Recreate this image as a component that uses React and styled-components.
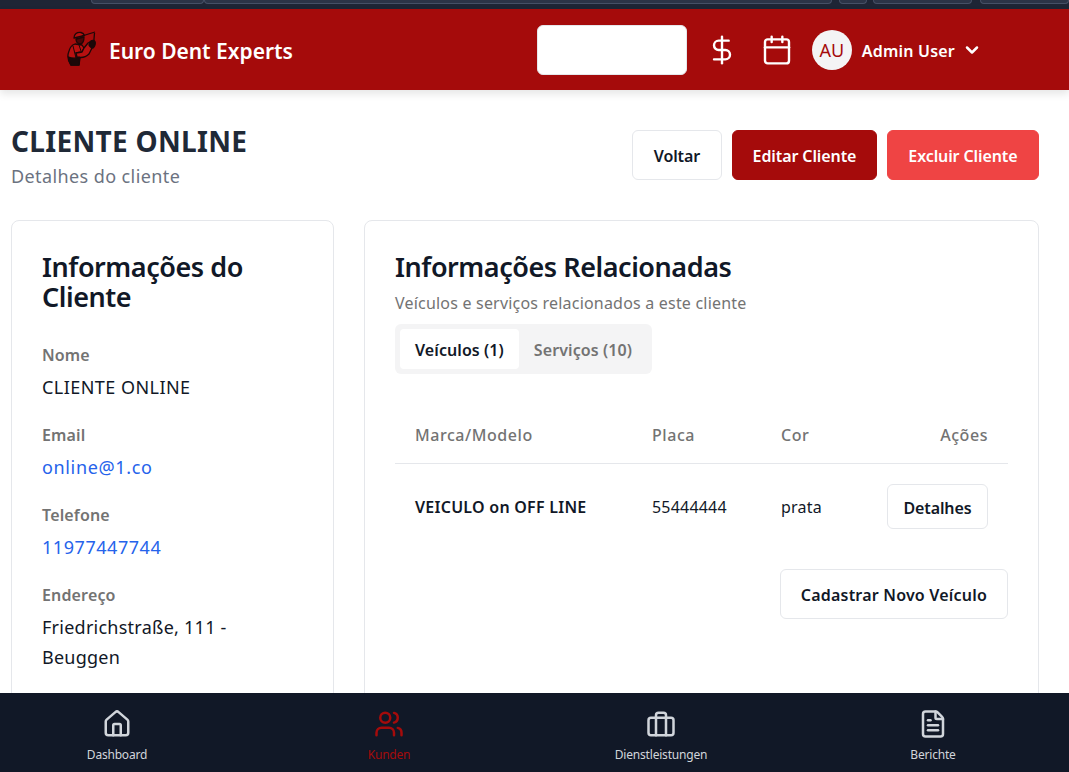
import React from "react";
import styled, { createGlobalStyle } from "styled-components";
import { DollarSign, Calendar, ChevronDown, House, Users, FileText } from "lucide-react";

const Global = createGlobalStyle`
  html, body { margin: 0; padding: 0; background: #fff; }
  body { font-family: "Noto Sans", "Open Sans", sans-serif; color: #111827; height: 772px; overflow: hidden; }
  * { box-sizing: border-box; }
`;

const Chrome = styled.div`
  height: 9px; background: #1e2535; display: flex; padding-left: 91px;
`;
const ChromeTab = styled.div`
  width: ${(p) => p.$w}px; height: 4px; background: #2c3447; border: 1px solid #465066; border-top: 0;
  border-radius: 0 0 5px 5px; margin-right: ${(p) => p.$gap || 0}px;
`;
const Header = styled.header`
  height: 81px; background: #a50b0b; box-shadow: 0 4px 8px rgba(0,0,0,.1);
  display: flex; align-items: center; padding: 0 87px 0 67px; color: #fff; position: relative; z-index: 1;
`;
const Brand = styled.div`
  display: flex; align-items: center; gap: 11px; font-size: 21px; font-weight: 600; flex: 1; letter-spacing: -0.02px;
  span { padding-top: 3px; }
`;
const SearchBox = styled.div`
  width: 150px; height: 50px; background: #fff; border-radius: 6px; border: 1px solid #e5e7eb;
`;
const IconBtn = styled.div`
  width: 32px; display: flex; justify-content: center; margin-left: ${(p) => p.$ml}px;
`;
const Avatar = styled.div`
  width: 40px; height: 40px; border-radius: 50%; background: #f4f4f5; color: #a50b0b;
  display: flex; align-items: center; justify-content: center; font-size: 18px; margin-left: 19px;
`;
const UserName = styled.div`
  font-size: 16px; font-weight: 600; margin-left: 10px; margin-right: 7px; padding-top: 3px; letter-spacing: 0.2px;
`;
const Main = styled.main`
  height: 682px; overflow: hidden; padding: 40px 30px 0 11px;
`;
const TitleRow = styled.div`
  display: flex; justify-content: space-between; align-items: flex-start; height: 90px;
`;
const Title = styled.h1`
  margin: 0; font-size: 28px; line-height: 24px; font-weight: 700; color: #1f2937; letter-spacing: 0.3px;
  position: relative; top: -1px;
`;
const Subtitle = styled.p`
  margin: 10px 0 0; font-size: 18px; line-height: 24px; color: #6b7280; letter-spacing: 0.4px;
`;
const Actions = styled.div`
  display: flex; gap: 10px;
`;
const Button = styled.button`
  font-family: inherit; height: ${(p) => p.$h || 50}px; padding: 2px ${(p) => p.$px || 20}px 0; border-radius: 6px;
  font-size: 16px; font-weight: 600; cursor: pointer; letter-spacing: -0.1px;
  background: ${(p) => p.$bg || "#fff"}; color: ${(p) => p.$color || "#111827"};
  border: 1px solid ${(p) => p.$border || "#e5e7eb"};
`;
const Columns = styled.div`
  display: grid; grid-template-columns: 323px 675px; gap: 30px;
`;
const Card = styled.section`
  border: 1px solid #e5e7eb; border-radius: 8px; background: #fff; padding: 31px 30px 30px; height: 600px;
`;
const CardTitle = styled.h2`
  margin: 0; font-size: 27px; line-height: 30px; font-weight: 600; color: #111827; letter-spacing: -0.45px;
`;
const Field = styled.div`
  margin-top: ${(p) => p.$mt || 18}px;
`;
const Label = styled.div`
  font-size: 16px; line-height: 30px; font-weight: 600; color: #737373; letter-spacing: 0.15px;
`;
const Value = styled.div`
  font-size: 18px; line-height: 30px; padding-top: 2px; letter-spacing: ${(p) => p.$ls || 0.45}px;
  color: ${(p) => (p.$link ? "#2563eb" : "#111827")};
`;
const Desc = styled.p`
  margin: 9px 0 0; font-size: 16px; line-height: 24px; color: #737373; letter-spacing: 0.2px;
`;
const Tabs = styled.div`
  margin-top: 9px; display: inline-flex; padding: 5px; background: #f4f4f5; border-radius: 6px; height: 50px;
`;
const Tab = styled.div`
  display: flex; align-items: center; padding: 2px 15px 0; border-radius: 4px; font-size: 16px; font-weight: 600; letter-spacing: 0.08px;
  background: ${(p) => (p.$active ? "#fff" : "transparent")};
  color: ${(p) => (p.$active ? "#111827" : "#737373")};
`;
const Table = styled.div`
  margin-top: 30px;
`;
const TableHead = styled.div`
  display: grid; grid-template-columns: 237px 129px 1fr auto; align-items: center; height: 60px; padding: 2px 20px 0;
  border-bottom: 1px solid #e5e7eb; color: #737373; font-weight: 500; font-size: 16px; letter-spacing: 0.55px;
`;
const TableRow = styled.div`
  display: grid; grid-template-columns: 237px 129px 1fr auto; align-items: center; height: 85px; padding: 0 20px;
  font-size: 16px; color: #111827; letter-spacing: 0.2px;
`;
const Strong = styled.span`
  font-weight: 600; letter-spacing: 0.25px;
`;
const Footer = styled.div`
  display: flex; justify-content: flex-end; margin-top: 20px;
`;
const WideButton = styled(Button)`
  letter-spacing: 0.2px;
`;
const BottomNav = styled.nav`
  position: fixed; left: 0; right: 0; bottom: 0; height: 79px; background: #111827;
  display: grid; grid-template-columns: repeat(4, 234px); column-gap: 38px;
`;
const NavItem = styled.div`
  display: flex; flex-direction: column; align-items: center; padding-top: 16px;
  color: ${(p) => (p.$active ? "#a50b0b" : "#d1d5db")}; font-size: 12px; line-height: 16px; letter-spacing: -0.2px;
  span { margin-top: 8px; }
`;

const Worker = () => (
  <svg width="31" height="35" viewBox="0 0 31 35" style={{ marginTop: -2 }} stroke="#1c0808" strokeWidth="1.3" strokeLinejoin="round">
    <path d="M8 13C5 14 3 16 2 20 0 25 1 30 4 34h8l1-7-3-1-1-4 6-1 2-4-2-3z" fill="#b81010" />
    <path d="M17 17l4-5 4-2 2 3-5 10c-3 3-8 4-12 3l-1-4 6-1z" fill="#b81010" />
    <path d="M6 15l3 12M12 14l2 6" fill="none" strokeWidth="1" />
    <path d="M1.500 26c3 1.500 7 1.500 11 .5l-.5 7.500H4c-1.500-2-2-5-2.500-8z" fill="#1c0808" />
    <path d="M9 8l8-2c0 4-1 6-3 7-3 0-5-2-5-5z" fill="#4a0606" />
    <path d="M7 7c0-4 3-6 7-5.500 2 .5 3 1.500 3.500 3z" fill="#b81010" />
    <path d="M15 5L28 1M27.500 2l-1 12" fill="none" />
    <path d="M23 11c1.500-2 4-2 5-.500.8 1.500 0 5-2 6.500-1.500 0-3-1-4-3z" fill="#1c0808" />
  </svg>
);
const Briefcase = ({ size }) => (
  <svg width={size} height={size} viewBox="0 0 24 24" fill="none" stroke="currentColor" strokeWidth="2" strokeLinecap="round" strokeLinejoin="round">
    <rect x="2" y="7" width="20" height="14" rx="2" />
    <path d="M16 21V5a2 2 0 0 0-2-2h-4a2 2 0 0 0-2 2v16" />
  </svg>
);

export default function App() {
  return (
    <>
      <Global />
      <Chrome>
        <ChromeTab $w={114} />
        <ChromeTab $w={632} $gap={7} />
        <ChromeTab $w={28} $gap={6} />
        <ChromeTab $w={99} $gap={8} />
        <ChromeTab $w={90} />
      </Chrome>
      <Header>
        <Brand><Worker /><span>Euro Dent Experts</span></Brand>
        <SearchBox />
        <IconBtn $ml={19}><DollarSign size={32} strokeWidth={1.8} /></IconBtn>
        <IconBtn $ml={23}><Calendar size={32} strokeWidth={1.8} /></IconBtn>
        <Avatar>AU</Avatar>
        <UserName>Admin User</UserName>
        <ChevronDown size={20} strokeWidth={3} />
      </Header>
      <Main>
        <TitleRow>
          <div>
            <Title>CLIENTE ONLINE</Title>
            <Subtitle>Detalhes do cliente</Subtitle>
          </div>
          <Actions>
            <Button $px={21}>Voltar</Button>
            <Button $px={19.5} $bg="#a50b0b" $color="#fff" $border="#a50b0b">Editar Cliente</Button>
            <Button $px={20.5} $bg="#ef4444" $color="#fff" $border="#ef4444">Excluir Cliente</Button>
          </Actions>
        </TitleRow>
        <Columns>
          <Card>
            <CardTitle>Informações do Cliente</CardTitle>
            <Field $mt={28}><Label>Nome</Label><Value>CLIENTE ONLINE</Value></Field>
            <Field><Label>Email</Label><Value $link $ls={0.65}>online@1.co</Value></Field>
            <Field><Label>Telefone</Label><Value $link $ls={0.55}>11977447744</Value></Field>
            <Field><Label>Endereço</Label><Value $ls={0.25}>Friedrichstraße, 111 - Beuggen</Value></Field>
          </Card>
          <Card>
            <CardTitle>Informações Relacionadas</CardTitle>
            <Desc>Veículos e serviços relacionados a este cliente</Desc>
            <Tabs>
              <Tab $active>Veículos (1)</Tab>
              <Tab>Serviços (10)</Tab>
            </Tabs>
            <Table>
              <TableHead>
                <div>Marca/Modelo</div><div>Placa</div><div>Cor</div><div>Ações</div>
              </TableHead>
              <TableRow>
                <Strong>VEICULO on OFF LINE</Strong><div>55444444</div><div>prata</div>
                <Button $h={45} $px={15.5}>Detalhes</Button>
              </TableRow>
            </Table>
            <Footer><WideButton>Cadastrar Novo Veículo</WideButton></Footer>
          </Card>
        </Columns>
      </Main>
      <BottomNav>
        <NavItem><House size={30} /><span>Dashboard</span></NavItem>
        <NavItem $active><Users size={30} /><span>Kunden</span></NavItem>
        <NavItem><Briefcase size={30} /><span>Dienstleistungen</span></NavItem>
        <NavItem><FileText size={30} /><span>Berichte</span></NavItem>
      </BottomNav>
    </>
  );
}
